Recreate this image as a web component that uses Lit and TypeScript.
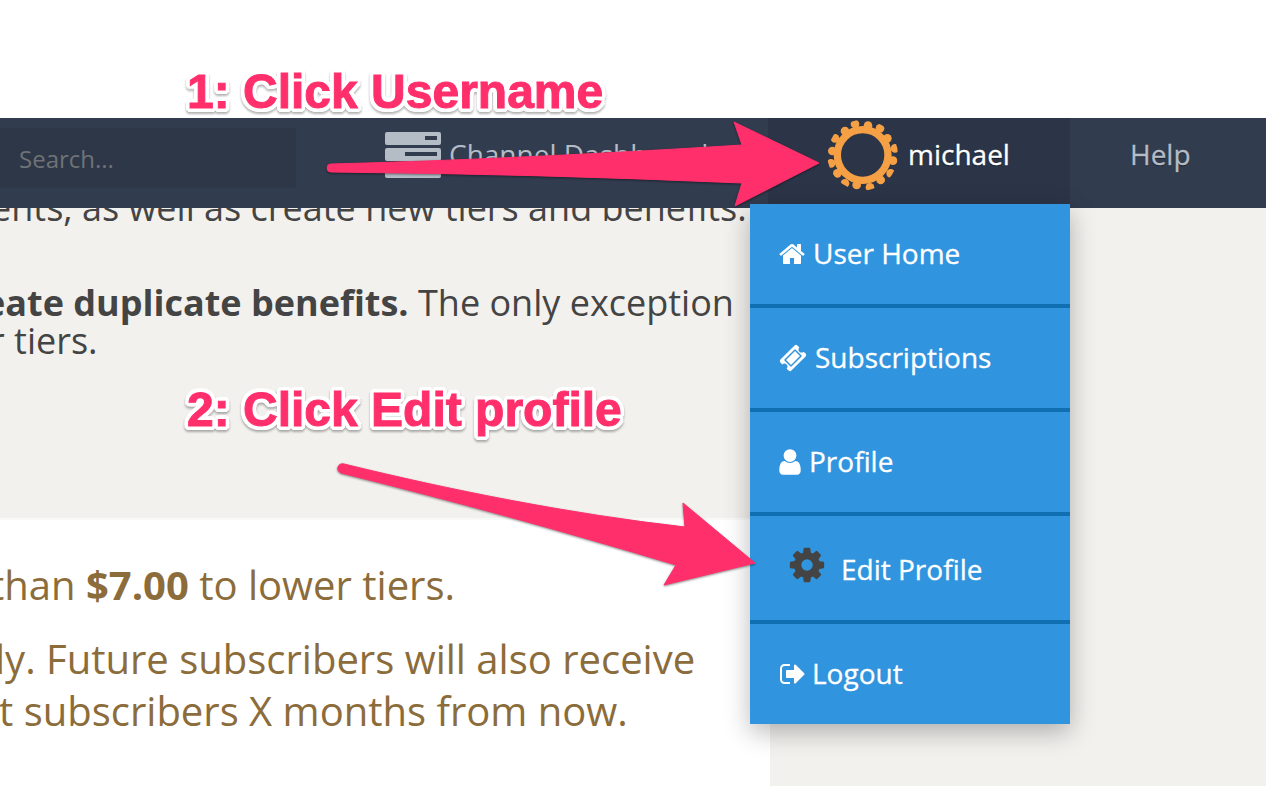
import { LitElement, html, css, svg } from "lit";
import { customElement } from "lit/decorators.js";

const ICONS: Record<string, string> = {
  home: "M1472 992v480q0 26-19 45t-45 19h-384v-384h-256v384h-384q-26 0-45-19t-19-45v-480q0-1 .5-3t.5-3l575-474 575 474q1 2 1 6zm223-69l-62 74q-8 9-21 11h-3q-13 0-21-7l-692-577-692 577q-12 8-24 7-13-2-21-11l-62-74q-8-10-7-23.500t11-21.500l719-599q32-26 76-26t76 26l244 204v-195q0-14 9-23t23-9h192q14 0 23 9t9 23v408l219 182q10 8 11 21.500t-7 23.500z",
  ticket: "M1024 452l316 316-572 572-316-316zm-211 979l618-618q19-19 19-45t-19-45l-362-362q-18-18-45-18t-45 18l-618 618q-19 19-19 45t19 45l362 362q18 18 45 18t45-18zm889-637l-907 908q-37 37-90.500 37t-90.500-37l-126-126q56-56 56-136t-56-136-136-56-136 56l-125-126q-37-37-37-90.500t37-90.500l907-906q37-37 90.500-37t90.500 37l125 125q-56 56-56 136t56 136 136 56 136-56l126 125q37 37 37 90.500t-37 90.500z",
  user: "M1536 1399q0 109-62.500 187t-150.500 78h-854q-88 0-150.500-78t-62.500-187q0-85 8.500-160.500t31.500-152 58.500-131 94-89 134.500-34.500q131 128 313 128t313-128q76 0 134.500 34.500t94 89 58.500 131 31.500 152 8.500 160.500zm-256-887q0 159-112.500 271.500t-271.500 112.500-271.500-112.500-112.500-271.500 112.500-271.500 271.500-112.500 271.500 112.500 112.500 271.500z",
  cog: "M1152 896q0-106-75-181t-181-75-181 75-75 181 75 181 181 75 181-75 75-181zm512-109v222q0 12-8 23t-20 13l-185 28q-19 54-39 91 35 50 107 138 10 12 10 25t-9 23q-27 37-99 108t-94 71q-12 0-26-9l-138-108q-44 23-91 38-16 136-29 186-7 28-36 28h-222q-14 0-24.500-8.500t-11.500-21.500l-28-184q-49-16-90-37l-141 107q-10 9-25 9-14 0-25-11-126-114-165-168-7-10-7-23 0-12 8-23 15-21 51-66.500t54-70.500q-27-50-41-99l-183-27q-13-2-21-12.500t-8-23.500v-222q0-12 8-23t19-13l186-28q14-46 39-92-40-57-107-138-10-12-10-24 0-10 9-23 26-36 98.500-107.500t94.500-71.500q13 0 26 10l138 107q44-23 91-38 16-136 29-186 7-28 36-28h222q14 0 24.500 8.500t11.500 21.500l28 184q49 16 90 37l142-107q9-9 24-9 13 0 25 10 129 119 165 170 7 8 7 22 0 12-8 23-15 21-51 66.500t-54 70.500q26 50 41 98l183 28q13 2 21 12.500t8 23.500z",
  out: "M704 1440q0 4 1 20t.5 26.500-3 23.500-10 19.500-20.500 6.500h-320q-119 0-203.500-84.500t-84.500-203.500v-704q0-119 84.500-203.500t203.500-84.500h320q13 0 22.500 9.500t9.500 22.500q0 4 1 20t.5 26.500-3 23.500-10 19.500-20.500 6.500h-320q-66 0-113 47t-47 113v704q0 66 47 113t113 47h312l11.500 1 11.500 3 8 5.500 7 9 2 13.500zm928-544q0 26-19 45l-544 544q-19 19-45 19t-45-19-19-45v-288h-448q-26 0-45-19t-19-45v-384q0-26 19-45t45-19h448v-288q0-26 19-45t45-19 45 19l544 544q19 19 19 45z",
};

const DOTS: [number, number][] = [
  [108, 27], [147, 32], [183, 40], [205, 70], [228, 100], [222, 137], [215, 175], [185, 195],
  [153, 217], [113, 210], [78, 205], [55, 175], [36, 145], [40, 108], [48, 70], [78, 48],
];

const icon = (name: string, cls: string) =>
  html`<svg class="fa ${cls}" viewBox="0 0 1792 1792" aria-hidden="true"><path d=${ICONS[name]} fill="currentColor"></path></svg>`;

const MENU = [
  { i: "home", t: "User Home", c: "" },
  { i: "ticket", t: "Subscriptions", c: "" },
  { i: "user", t: "Profile", c: "" },
  { i: "cog", t: "Edit Profile", c: "edit" },
  { i: "out", t: "Logout", c: "last" },
];

@customElement("app-root")
export class AppRoot extends LitElement {
  static styles = css`
    :host {
      display: block;
      position: relative;
      width: 1266px;
      height: 786px;
      overflow: hidden;
      background: #fff;
      font-family: "Open Sans", sans-serif;
    }
    .top { height: 118px; }
    nav {
      height: 90px;
      display: flex;
      align-items: stretch;
      background: #323c4f;
    }
    .search {
      width: 296px;
      height: 60px;
      margin-top: 10px;
      box-sizing: border-box;
      padding-left: 19px;
      background: #2d3748;
      color: #6f7276;
      font-size: 24px;
      line-height: 62px;
    }
    .dash {
      width: 472px;
      box-sizing: border-box;
      padding: 14px 0 0 89px;
      display: flex;
      gap: 8px;
      color: #b4bcc6;
      font-size: 28px;
      line-height: 44px;
      white-space: nowrap;
    }
    .server { width: 56px; height: 46px; flex: none; }
    .userbox {
      width: 302px;
      background: #2c3547;
      display: flex;
      align-items: center;
      box-sizing: border-box;
      padding: 0 0 16px 51px;
      color: #fff;
      font-size: 28px;
      -webkit-text-stroke: 0.3px #fff;
      text-shadow: 0 1px 1px rgba(0, 0, 0, 0.5);
    }
    .userbox span { position: relative; top: -1px; }
    .avatar { width: 90px; height: 80px; flex: none; margin-right: -1px; }
    .help {
      padding-left: 60px;
      color: #b4bcc6;
      font-size: 28px;
      line-height: 72px;
      -webkit-text-stroke: 0.3px #b4bcc6;
      text-shadow: 0 1px 1px rgba(0, 0, 0, 0.5);
    }
    .content {
      display: grid;
      grid-template-columns: 770px 1fr;
      height: 578px;
      background: #f2f1ee;
    }
    .left { display: flex; flex-direction: column; min-width: 0; overflow: hidden; }
    .upper {
      height: 310px;
      color: #444;
      font-size: 36px;
      white-space: nowrap;
    }
    .upper p, .lower p { margin: 0; }
    .l1 { margin-left: -9px !important; margin-top: -20px !important; line-height: 40px; }
    .l2 { margin-top: 56px !important; margin-left: -16px !important; line-height: 38px; }
    .l3 { margin-left: -10px !important; line-height: 38px; }
    .lower {
      flex: 1;
      margin-top: 2px;
      background: #fff;
      box-shadow: 0 -2px 0 #f9f9f7;
      color: #8b6c3a;
      font-size: 40px;
      white-space: nowrap;
      padding-top: 39px;
    }
    .lower p { line-height: 52px; }
    .m1 { margin-left: -10px !important; }
    .m2 { margin-top: 22px !important; margin-left: -5px !important; }
    .m3 { margin-left: -1px !important; }
    .menu {
      position: absolute;
      left: 750px;
      top: 204px;
      width: 320px;
      background: #3094de;
      box-shadow: 0 8px 24px rgba(0, 0, 0, 0.28);
      color: #fff;
      font-size: 28px;
      -webkit-text-stroke: 0.3px #fff;
    }
    .row {
      height: 100px;
      box-sizing: content-box;
      border-bottom: 4px solid #0f6fb0;
      display: flex;
      align-items: center;
      padding-left: 29px;
    }
    .row span { position: relative; top: -1px; }
    .row.edit { height: 104px; }
    .row.edit span { top: 1px; }
    .row.last { border-bottom: 0; }
    .fa { width: 28px; height: 28px; flex: none; }
    .fa.home { margin-left: -1px; margin-right: 7px; }
    .fa.ticket { margin-right: 8px; }
    .fa.user { width: 30px; height: 30px; margin-left: -4px; margin-right: 4px; }
    .fa.cog { width: 40px; height: 40px; color: #444; margin-left: 8px; margin-right: 14px; margin-top: -6px; }
    .fa.out { margin-right: 5px; }
    .overlay { position: absolute; inset: 0; width: 1266px; height: 786px; pointer-events: none; filter: drop-shadow(0 1px 1px rgba(0,0,0,.45)); }
    .note {
      position: absolute;
      font-family: "Liberation Sans", Arial, sans-serif;
      font-weight: 700;
      font-size: 48px;
      line-height: 52px;
      color: #ff2f6c;
      white-space: nowrap;
      -webkit-text-stroke: 1px #ff2f6c;
      text-shadow:
        4px 0 0 #fff, -4px 0 0 #fff, 0 4px 0 #fff, 0 -4px 0 #fff,
        3px 3px 0 #fff, -3px 3px 0 #fff, 3px -3px 0 #fff, -3px -3px 0 #fff,
        4px 2px 0 #fff, -4px 2px 0 #fff, 4px -2px 0 #fff, -4px -2px 0 #fff,
        2px 4px 0 #fff, -2px 4px 0 #fff, 2px -4px 0 #fff, -2px -4px 0 #fff;
      filter: drop-shadow(0 2px 1px rgba(0,0,0,.3));
    }
    .n1 { left: 187px; top: 66px; }
    .n2 { left: 187px; top: 384px; }
  `;

  render() {
    return html`
      <div class="top"></div>
      <nav>
        <div class="search">Search...</div>
        <div class="dash">
          <svg class="server" viewBox="0 0 56 46" aria-hidden="true">
            <rect y="0" width="56" height="13" rx="2" fill="#b4bcc6"></rect>
            <rect x="40" y="4" width="12" height="4" fill="#323c4f"></rect>
            <rect y="16" width="56" height="13" rx="2" fill="#b4bcc6"></rect>
            <rect x="20" y="20" width="32" height="4" fill="#323c4f"></rect>
            <rect y="33" width="56" height="13" rx="2" fill="#b4bcc6"></rect>
          </svg>
          <span>Channel Dashboard</span>
        </div>
        <div class="userbox">
          <svg class="avatar" viewBox="0 0 270 240" aria-hidden="true">
            <defs><clipPath id="av"><circle cx="131" cy="120" r="106"></circle></clipPath></defs>
            <g clip-path="url(#av)" fill="#f6a045">
              <circle cx="131" cy="120" r="76" fill="none" stroke="#f6a045" stroke-width="22"></circle>
              ${DOTS.map(([x, y]) => svg`<circle cx=${x} cy=${y} r="13"></circle>`)}
            </g>
          </svg>
          <span>michael</span>
        </div>
        <div class="help">Help</div>
      </nav>
      <div class="content">
        <div class="left">
          <div class="upper">
            <p class="l1">ents, as well as create new tiers and benefits.</p>
            <p class="l2"><b>eate duplicate benefits.</b> The only exception</p>
            <p class="l3">r tiers.</p>
          </div>
          <div class="lower">
            <p class="m1">than <b>$7.00</b> to lower tiers.</p>
            <p class="m2">ly. Future subscribers will also receive</p>
            <p class="m3">t subscribers X months from now.</p>
          </div>
        </div>
        <div></div>
      </div>
      <div class="menu">
        ${MENU.map(
          (m) => html`<div class="row ${m.c}">${icon(m.i, m.i)}<span>${m.t}</span></div>`
        )}
      </div>
      <svg class="overlay" viewBox="0 0 1266 786" aria-hidden="true">
        <path fill="#ff2f6c" stroke="#ff2f6c" stroke-width="1" stroke-linejoin="round"
          d="M331 164 Q 520 159 742 145 L734 122 L819 163 L735 206 L742 183 Q 540 174 331 172 A4 4 0 0 1 331 164Z"></path>
        <path fill="#ff2f6c" stroke="#ff2f6c" stroke-width="1" stroke-linejoin="round"
          d="M344 464 C 450 490 570 514 685 527 L683 503 L755 563 L664 585 L676 565 C 560 530 450 500 341 473 A4.500 4.500 0 0 1 344 464Z"></path>
      </svg>
      <div class="note n1">1: Click Username</div>
      <div class="note n2">2: Click Edit profile</div>
    `;
  }
}
